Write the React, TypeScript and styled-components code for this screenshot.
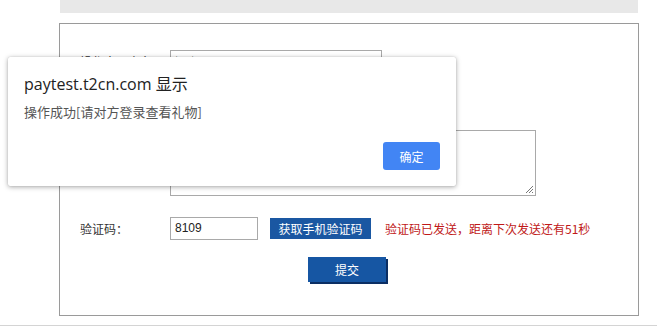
import React from 'react'
import styled, { createGlobalStyle } from 'styled-components'

const GlobalStyle = createGlobalStyle`
   html, body {
      margin: 0;
      padding: 0;
      background: #fff;
      font-family: "Noto Sans CJK SC", "Liberation Sans", sans-serif;
   }
`

const Page = styled.div`
   position: relative;
   width: 657px;
   height: 332px;
   overflow: hidden;
`
const TopBar = styled.div`
   margin-left: 60px;
   width: 578px;
   height: 13px;
   background: #e8e8e8;
`
const Panel = styled.div`
   margin: 10px 0 0 59px;
   border: 1px solid #9a9a9a;
   padding: 26px 0 0 20px;
   width: 558px;
   height: 265px;
`
const Footer = styled.div`
   margin-top: 9px;
   border-top: 1px solid #d4d4d4;
`
const Row = styled.div<{ $gap?: number }>`
   display: flex;
   align-items: center;
   margin-bottom: ${(p) => p.$gap ?? 17}px;
`
const Label = styled.span`
   width: 90px;
   font-size: 12px;
   color: #333;
   flex-shrink: 0;
`
const TextInput = styled.div<{ $w: number }>`
   width: ${(p) => p.$w}px;
   height: 21px;
   border: 1px solid #a9a9a9;
   font-family: "Liberation Sans", sans-serif;
   font-size: 12px;
   line-height: 21px;
   padding-left: 4px;
   color: #222;
`
const TextArea = styled.div`
   position: relative;
   width: 364px;
   height: 64px;
   border: 1px solid #a9a9a9;
`
const Grip = styled.svg`
   position: absolute;
   right: 1px;
   bottom: 1px;
`
const SmsButton = styled.button`
   margin-left: 12px;
   width: 101px;
   height: 21px;
   border: 0;
   padding: 0;
   background: #1a57a2;
   color: #fff;
   font-family: inherit;
   font-size: 12px;
   line-height: 21px;
`
const Notice = styled.span`
   margin-left: 14px;
   font-size: 12px;
   color: #c01818;
`
const SubmitRow = styled.div`
   display: flex;
   padding-left: 228px;
`
const SubmitButton = styled.button`
   width: 78px;
   height: 25px;
   border: 0;
   padding: 0;
   background: #1656a3;
   color: #fff;
   font-family: inherit;
   font-size: 12px;
   box-shadow: 2px 2px 0 #0b2e63;
`
const Dialog = styled.div`
   position: absolute;
   left: 8px;
   top: 57px;
   width: 448px;
   height: 129px;
   box-sizing: border-box;
   padding: 15px 16px 0 16px;
   background: #fff;
   border-radius: 2px;
   box-shadow: 0 1px 5px rgba(0, 0, 0, 0.35), 0 0 1px rgba(0, 0, 0, 0.2);
   display: flex;
   flex-direction: column;
`
const DialogTitle = styled.div`
   font-family: "Open Sans", "Noto Sans CJK SC", sans-serif;
   font-size: 16px;
   color: #222;
   line-height: 24px;
`
const DialogText = styled.div`
   margin-top: 7px;
   font-size: 13px;
   color: #555;
   line-height: 18px;
`
const DialogActions = styled.div`
   display: flex;
   justify-content: flex-end;
   margin-top: 21px;
`
const OkButton = styled.button`
   width: 57px;
   height: 28px;
   border: 0;
   border-radius: 3px;
   background: #4285f4;
   color: #fff;
   font-family: inherit;
   font-size: 12px;
`

const App = () => {
   return (
      <Page>
         <GlobalStyle />
         <TopBar />
         <Panel>
            <Row>
               <Label>操作人用户名：</Label>
               <TextInput $w={206}>test</TextInput>
            </Row>
            <Row>
               <Label />
               <TextInput $w={206} />
            </Row>
            <Row $gap={21}>
               <Label />
               <TextArea>
                  <Grip width="9" height="9" viewBox="0 0 9 9">
                     <path d="M8 1 L1 8 M8 4 L4 8 M8 7 L7 8" stroke="#777" strokeWidth="1" />
                  </Grip>
               </TextArea>
            </Row>
            <Row>
               <Label>验证码：</Label>
               <TextInput $w={82}>8109</TextInput>
               <SmsButton>获取手机验证码</SmsButton>
               <Notice>验证码已发送，距离下次发送还有51秒</Notice>
            </Row>
            <SubmitRow>
               <SubmitButton>提交</SubmitButton>
            </SubmitRow>
         </Panel>
         <Footer />
         <Dialog>
            <DialogTitle>paytest.t2cn.com 显示</DialogTitle>
            <DialogText>操作成功[请对方登录查看礼物]</DialogText>
            <DialogActions>
               <OkButton>确定</OkButton>
            </DialogActions>
         </Dialog>
      </Page>
   )
}

export default App
